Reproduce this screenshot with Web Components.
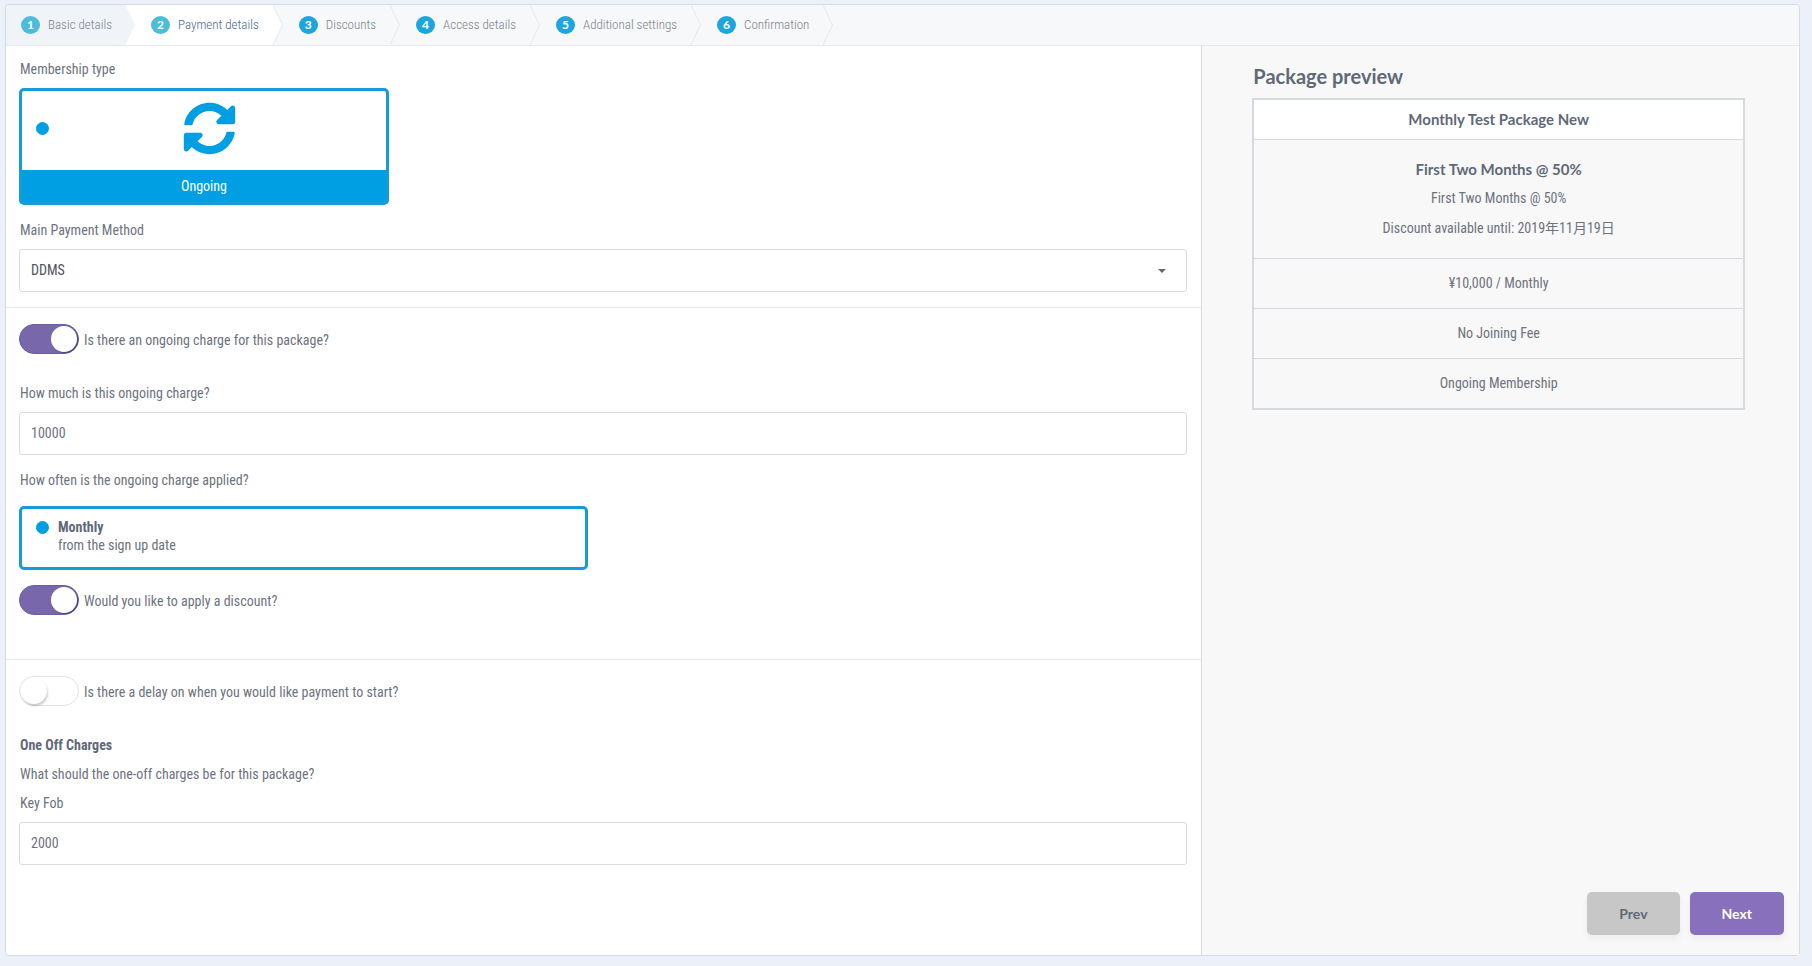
<!DOCTYPE html>
<html lang="en">
<head>
<meta charset="utf-8">
<meta name="viewport" content="width=device-width, initial-scale=1">
<title>Package wizard</title>
<style>
  :root {
    --blue: #009fe3;
    --purple: #7868ab;
    --text: #6e737d;
    --strong: #5f6977;
    --line: #e6e9ec;
    --frame: #d6d9e0;
    --title-font: Lato, "Open Sans", sans-serif;
  }
  body {
    margin: 0;
    background: #ecf1f9;
    color: var(--text);
    font: 400 14px/20px "Roboto Condensed", Roboto, "Noto Sans CJK JP", sans-serif;
  }
</style>
</head>
<body>
<package-wizard></package-wizard>
<script>
const define = (name, template, setup) => {
  customElements.define(name, class extends HTMLElement {
    constructor() {
      super();
      const root = this.attachShadow({ mode: 'open' });
      root.innerHTML = template;
    }
    connectedCallback() {
      if (setup) setup(this, this.shadowRoot);
    }
  });
};

define('wizard-step', `
  <style>
    :host { display: flex; --fill: #f6f8fa; --next: #f6f8fa; --badge: #1fa5dd; --ink: #7d8186; --edge: #e6e9ed; --pad: 0 14px 0 16px; }
    :host([state="done"]) { --fill: #f0f4f9; --next: #fff; --badge: #4cbcdb; --edge: #f0f4f9; --pad: 0 13px 0 15px; }
    :host([state="current"]) { --fill: #fff; --badge: #4cbcdb; --ink: #48688c; }
    button {
      display: flex; align-items: center; gap: 8px; height: 40px; padding: var(--pad);
      border: 0; background: var(--fill); color: var(--ink); font: inherit; font-size: 13px; font-weight: 300;
      cursor: pointer; white-space: nowrap;
    }
    .number {
      width: 19px; height: 18px; border-radius: 50%; background: var(--badge); color: #fff;
      font: 700 12px/18px var(--title-font); text-align: center;
    }
    svg { display: block; width: 10px; height: 40px; background: var(--next); }
    .body { fill: var(--fill); }
    .edge { fill: none; stroke: var(--edge); }
  </style>
  <button type="button"><span class="number"></span><span><slot></slot></span></button>
  <svg viewBox="0 0 10 40" aria-hidden="true">
    <path class="body" d="M0 0 9.5 20 0 40z"/><path class="edge" d="M0 0 9.5 20 0 40"/>
  </svg>`,
  (host, root) => {
    root.querySelector('.number').textContent = host.getAttribute('number');
    if (host.getAttribute('state') === 'current') root.querySelector('button').setAttribute('aria-current', 'step');
  });

define('wizard-steps', `
  <style>
    :host { display: block; background: #f6f8fa; border-bottom: 1px solid var(--line); border-radius: 4px 4px 0 0; overflow: hidden; }
    nav { display: flex; }
  </style>
  <nav aria-label="Steps"><slot></slot></nav>`);

define('text-field', `
  <style>
    :host { display: flex; flex-direction: column; gap: 9px; }
    label { padding-left: 1px; }
    input {
      box-sizing: border-box; width: 100%; height: 43px; padding: 0 11px 1px; border: 1px solid #d9dbde;
      border-radius: 3px; background: #fff; color: inherit; font: inherit; outline: 0;
    }
  </style>
  <label for="field"><slot></slot></label>
  <input id="field" type="text" inputmode="numeric">`,
  (host, root) => { root.querySelector('input').value = host.getAttribute('value'); });

define('select-field', `
  <style>
    :host { display: flex; flex-direction: column; gap: 9px; }
    label { padding-left: 1px; }
    .box { display: grid; align-items: center; }
    select, svg { grid-area: 1 / 1; }
    select {
      appearance: none; width: 100%; height: 43px; padding: 0 11px 1px; border: 1px solid #d9dbde;
      border-radius: 3px; background: #fff; color: #50545c; font: inherit; outline: 0;
    }
    svg { justify-self: end; width: 8px; height: 4px; margin-right: 21px; fill: #5f6977; pointer-events: none; }
  </style>
  <label for="field"><slot></slot></label>
  <div class="box">
    <select id="field"></select>
    <svg viewBox="0 0 8 4" aria-hidden="true"><path d="M0 0h8L4 4z"/></svg>
  </div>`,
  (host, root) => { root.querySelector('select').replaceChildren(new Option(host.getAttribute('value'))); });

define('toggle-switch', `
  <style>
    :host { display: block; }
    label { display: flex; align-items: center; gap: 5px; cursor: pointer; }
    span { padding-top: 2px; }
    input {
      appearance: none; box-sizing: border-box; display: flex; width: 60px; height: 30px; margin: 0; padding: 1px;
      border: 1px solid #e2e2e2; border-radius: 15px; background: #fff;
    }
    input::before {
      content: ""; width: 26px; height: 26px; border-radius: 50%; background: #fff;
      box-shadow: 1px 2px 2px rgba(0, 0, 0, .2);
    }
    input:checked { justify-content: flex-end; border-color: #6c5d9c; background: var(--purple); }
    input:checked::before { box-shadow: 1px 1px 1px rgba(50, 40, 90, .6); }
  </style>
  <label><input type="checkbox" role="switch"><span><slot></slot></span></label>`,
  (host, root) => { root.querySelector('input').checked = host.hasAttribute('checked'); });

const radioDot = `
  input {
    appearance: none; width: 13px; height: 13px; margin: 0; border-radius: 50%;
    border: 1px solid var(--blue); background: #fff;
  }
  input:checked { background: var(--blue); }`;

define('membership-option', `
  <style>
    :host { display: block; width: 370px; max-width: 100%; }
    label {
      display: block; border: 3px solid #169bd7; border-radius: 5px; background: var(--blue); cursor: pointer;
    }
    .top {
      box-sizing: border-box; display: grid; grid-template-columns: 13px 1fr; align-items: center; height: 79px;
      padding: 0 0 4px 14px; background: #fff; border-radius: 2px 2px 0 0;
    }
    svg { width: 53px; height: 53px; justify-self: center; fill: var(--blue); }
    .icon { display: grid; padding-right: 16px; }
    .name { display: block; padding: 6px 0; color: #fff; text-align: center; }
    ${radioDot}
  </style>
  <label>
    <span class="top">
      <input type="radio" name="type" checked>
      <span class="icon"><svg viewBox="0 0 512 512" aria-hidden="true"><path d="M370.72 133.28C339.458 104.008 298.888 87.962 255.848 88c-77.458.068-144.328 53.178-162.791 126.85-1.344 5.363-6.122 9.15-11.651 9.15H24.103c-7.498 0-13.194-6.807-11.807-14.176C33.933 94.924 134.813 8 256 8c66.448 0 126.791 26.136 171.315 68.685L463.03 40.97C478.149 25.851 504 36.559 504 57.941V192c0 13.255-10.745 24-24 24H345.941c-21.382 0-32.09-25.851-16.971-40.971l41.75-41.749zM32 296h134.059c21.382 0 32.09 25.851 16.971 40.971l-41.75 41.75c31.262 29.273 71.835 45.319 114.876 45.28 77.418-.07 144.315-53.144 162.787-126.849 1.344-5.363 6.122-9.15 11.651-9.15h57.304c7.498 0 13.194 6.807 11.807 14.176C478.067 417.076 377.187 504 256 504c-66.448 0-126.791-26.136-171.315-68.685L48.97 471.03C33.851 486.149 8 475.441 8 454.059V320c0-13.255 10.745-24 24-24z"/></svg></span>
    </span>
    <span class="name"><slot></slot></span>
  </label>`);

define('frequency-option', `
  <style>
    :host { display: block; width: 50%; }
    label {
      box-sizing: border-box; display: grid; grid-template-columns: 13px 1fr; column-gap: 9px;
      width: calc(100% - 15px); padding: 9px 14px 13px; border: 3px solid #169bd7; border-radius: 5px;
      line-height: 18px; cursor: pointer;
    }
    input { align-self: center; }
    strong { font-weight: 700; color: var(--strong); }
    .note { grid-column: 2; }
    ${radioDot}
  </style>
  <label>
    <input type="radio" name="frequency" checked>
    <strong><slot name="name"></slot></strong>
    <span class="note"><slot></slot></span>
  </label>`);

define('form-section', `
  <style>
    :host { display: flex; flex-direction: column; padding: 16px 14px 15px 13px; border-bottom: 1px solid var(--line); }
    :host([first]) { padding-top: 13px; }
    :host([tall]) { padding-bottom: 44px; }
    :host([last]) { border-bottom: 0; }
  </style>
  <slot></slot>`);

define('package-preview', `
  <style>
    :host { display: block; }
    h2 { margin: 0 0 9px; padding-left: 1px; color: var(--strong); font: 700 20px/26px var(--title-font); }
    .frame { border: 2px solid var(--frame); text-align: center; }
    h3 { margin: 0; color: var(--strong); font: 700 15px/20px var(--title-font); }
    .title { padding: 9px 0 10px; background: #fff; }
    .offer { padding: 19px 0 20px; }
    .offer p { margin: 9px 0 0; }
    .offer p + p { margin-top: 10px; }
    .frame > * + * { border-top: 1px solid var(--frame); }
    .line { margin: 0; padding: 14px 0 15px; }
  </style>
  <h2>Package preview</h2>
  <div class="frame">
    <div class="title"><h3>Monthly Test Package New</h3></div>
    <div class="offer">
      <h3>First Two Months @ 50%</h3>
      <p>First Two Months @ 50%</p>
      <p>Discount available until: 2019年11月19日</p>
    </div>
    <p class="line">¥10,000 / Monthly</p>
    <p class="line">No Joining Fee</p>
    <p class="line">Ongoing Membership</p>
  </div>`);

define('wizard-button', `
  <style>
    :host { display: block; }
    button {
      min-width: 92px; height: 43px; padding: 0 32px; border: 0; border-radius: 5px; background: #c7c7c7;
      color: var(--strong); font: 700 14px/20px var(--title-font); box-shadow: 0 4px 6px rgba(50, 50, 93, .06);
      cursor: pointer;
    }
    :host([primary]) button { background: #8870bd; color: #fff; }
  </style>
  <button type="button"><slot></slot></button>`);

define('package-wizard', `
  <style>
    :host { display: flex; box-sizing: border-box; min-height: 100vh; padding: 4px 12px 10px 5px; }
    .card {
      flex: 1; display: flex; flex-direction: column; border: 1px solid #d3dae3; border-radius: 4px; background: #fff;
    }
    .columns { flex: 1; display: grid; grid-template-columns: 2fr 1fr; }
    aside { display: flex; flex-direction: column; border-left: 1px solid var(--frame); background: #f8f8f8; }
    .preview { flex: 1; padding: 17px 52px 0 50px; border-right: 2px solid #fff; }
    .actions { display: flex; justify-content: flex-end; gap: 10px; padding: 0 15px 20px; }
    .label, h4 { margin: 0 0 9px; padding-left: 1px; font: inherit; }
    h4 { color: var(--strong); font-weight: 700; }
    .after { margin-top: 15px; }
    .group { margin-top: 29px; }
    .wide { margin-bottom: 16px; }
  </style>
  <div class="card">
    <wizard-steps>
      <wizard-step number="1" state="done">Basic details</wizard-step>
      <wizard-step number="2" state="current">Payment details</wizard-step>
      <wizard-step number="3">Discounts</wizard-step>
      <wizard-step number="4">Access details</wizard-step>
      <wizard-step number="5">Additional settings</wizard-step>
      <wizard-step number="6">Confirmation</wizard-step>
    </wizard-steps>
    <div class="columns">
      <main>
        <form-section first>
          <p class="label">Membership type</p>
          <membership-option>Ongoing</membership-option>
          <select-field class="after" value="DDMS">Main Payment Method</select-field>
        </form-section>
        <form-section tall>
          <toggle-switch checked>Is there an ongoing charge for this package?</toggle-switch>
          <text-field class="group" value="10000">How much is this ongoing charge?</text-field>
          <p class="label after wide">How often is the ongoing charge applied?</p>
          <frequency-option><span slot="name">Monthly</span>from the sign up date</frequency-option>
          <toggle-switch class="after" checked>Would you like to apply a discount?</toggle-switch>
        </form-section>
        <form-section last>
          <toggle-switch>Is there a delay on when you would like payment to start?</toggle-switch>
          <h4 class="group">One Off Charges</h4>
          <p class="label">What should the one-off charges be for this package?</p>
          <text-field value="2000">Key Fob</text-field>
        </form-section>
      </main>
      <aside>
        <div class="preview"><package-preview></package-preview></div>
        <div class="actions">
          <wizard-button>Prev</wizard-button>
          <wizard-button primary>Next</wizard-button>
        </div>
      </aside>
    </div>
  </div>`);
</script>
</body>
</html>
